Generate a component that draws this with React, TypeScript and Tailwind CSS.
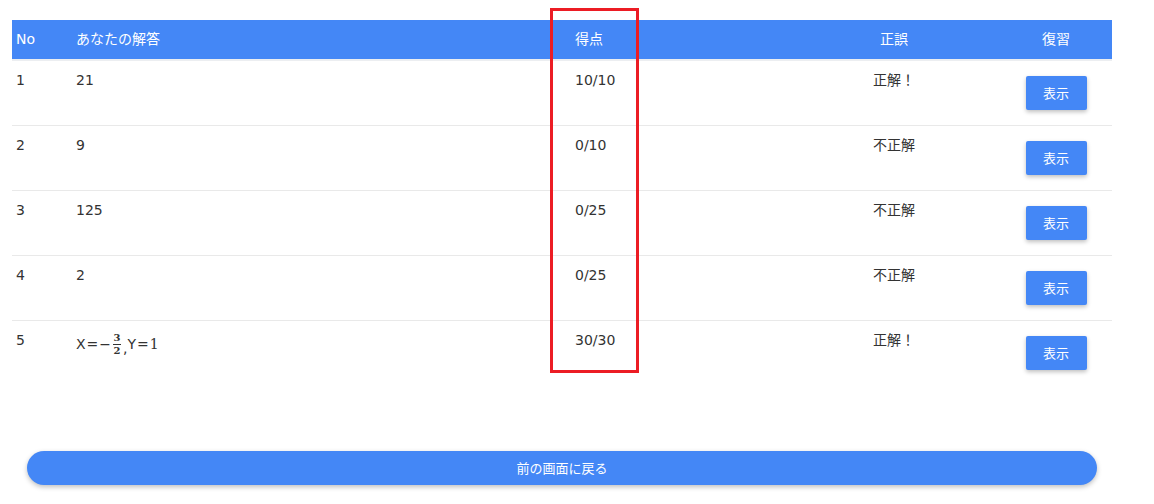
import React from "react";

type Row = {
  no: number;
  answer: React.ReactNode;
  score: string;
  result: string;
};

const Fraction = () => (
  <span className="inline-flex items-center font-['DejaVu_Sans',sans-serif] text-[14px]">
    <span>X</span>
    <span className="px-[1px]">=</span>
    <span>−</span>
    <span className="mx-[2px] inline-flex flex-col items-center leading-none font-['DejaVu_Serif',serif] text-[10px] font-bold">
      <span className="pb-[1px]">3</span>
      <span className="w-[8px] border-t border-[#333]" />
      <span className="pt-[1px]">2</span>
    </span>
    <span className="mt-[8px]">,</span>
    <span>Y</span>
    <span className="px-[1px]">=</span>
    <span className="font-['DejaVu_Serif',serif]">1</span>
  </span>
);

const rows: Row[] = [
  { no: 1, answer: "21", score: "10/10", result: "正解！" },
  { no: 2, answer: "9", score: "0/10", result: "不正解" },
  { no: 3, answer: "125", score: "0/25", result: "不正解" },
  { no: 4, answer: "2", score: "0/25", result: "不正解" },
  { no: 5, answer: <Fraction />, score: "30/30", result: "正解！" },
];

const cols = "grid grid-cols-[60px_499px_217px_212px_112px]";

export default function App() {
  return (
    <div className="relative w-[1154px] h-[504px] bg-white font-['DejaVu_Sans','Noto_Sans_CJK_JP',sans-serif] text-[14px] text-[#333]">
      <div className="pt-[20px] pl-[12px] w-[1112px]">
        <div className={`${cols} h-[39px] items-center bg-[#4487f6] text-white`}>
          <div className="pl-[4px]">No</div>
          <div className="pl-[4px]">あなたの解答</div>
          <div className="pl-[4px]">得点</div>
          <div className="text-center">正誤</div>
          <div className="text-center">復習</div>
        </div>
        <div className="h-[2px] bg-[#eceef1]" />
        {rows.map((r, i) => (
          <div
            key={r.no}
            className={`${cols} h-[65px] items-start ${
              i < rows.length - 1 ? "border-b border-[#e9e9e9]" : ""
            }`}
          >
            <div className="pl-[4px] pt-[9px] leading-[20px]">{r.no}</div>
            <div className="pl-[4px] pt-[9px] leading-[20px]">{r.answer}</div>
            <div className="pl-[4px] pt-[9px] leading-[20px]">{r.score}</div>
            <div className="pt-[9px] leading-[20px] text-center">{r.result}</div>
            <div className="flex justify-center pt-[15px]">
              <button className="w-[61px] h-[34px] rounded-[2px] bg-[#4487f6] text-white text-[13px] font-['Noto_Sans_CJK_JP',sans-serif] shadow-[0_2px_4px_rgba(0,0,0,0.25)]">
                表示
              </button>
            </div>
          </div>
        ))}
        <div className="pl-[15px] pt-[65px]">
          <button className="w-[1070px] h-[34px] rounded-full bg-[#4487f6] text-white text-[13px] font-['Noto_Sans_CJK_JP',sans-serif] shadow-[0_2px_5px_rgba(0,0,0,0.25)]">
            前の画面に戻る
          </button>
        </div>
      </div>
      <div className="absolute left-[550px] top-[8px] w-[89px] h-[365px] border-[3px] border-[#ec1c24]" />
    </div>
  );
}
